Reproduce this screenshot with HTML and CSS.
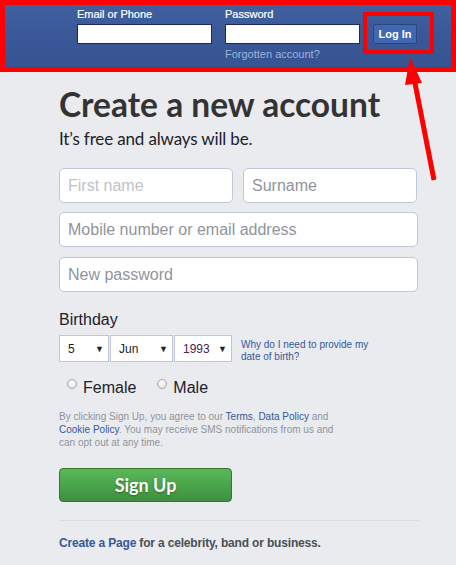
FILE: index.html
```html
<!DOCTYPE html>
<html>
<head>
<meta charset="utf-8">
<link rel="stylesheet" href="styles.css">
</head>
<body>
<header class="topbar">
  <div class="login">
    <label class="lbl">Email or Phone</label>
    <label class="lbl">Password</label>
    <span></span>
    <div class="tin"></div>
    <div class="tin"></div>
    <button class="loginbtn">Log In</button>
    <span></span>
    <a class="forgot">Forgotten account?</a>
    <span></span>
  </div>
</header>

<main class="signup">
  <h1 class="title">Create a new account</h1>
  <p class="sub">It’s free and always will be.</p>

  <div class="row two">
    <div class="field"><span class="ph light">First name</span></div>
    <div class="field"><span class="ph">Surname</span></div>
  </div>
  <div class="field mt9"><span class="ph">Mobile number or email address</span></div>
  <div class="field mt10"><span class="ph">New password</span></div>

  <div class="bday-label">Birthday</div>
  <div class="bday">
    <div class="sel d"><span>5</span><span class="arr">▼</span></div>
    <div class="sel m"><span>Jun</span><span class="arr">▼</span></div>
    <div class="sel y"><span class="yr">1993</span><span class="arr">▼</span></div>
    <a class="why">Why do I need to provide my date of birth?</a>
  </div>

  <div class="gender">
    <label class="radio"><span class="dot"></span>Female</label>
    <label class="radio"><span class="dot"></span>Male</label>
  </div>

  <p class="terms">By clicking Sign Up, you agree to our <a>Terms</a>, <a>Data Policy</a> and <a>Cookie Policy</a>. You may receive SMS notifications from us and can opt out at any time.</p>

  <button class="signbtn">Sign Up</button>

  <hr class="div">

  <p class="page"><a>Create a Page</a> for a celebrity, band or business.</p>
</main>

<div class="hl"></div>
<svg class="arrow" width="456" height="565" viewBox="0 0 456 565">
  <line x1="434" y1="180" x2="414" y2="78" stroke="#ff0000" stroke-width="5"/>
  <polygon points="410,57 422,83 405,85" fill="#ff0000"/>
</svg>
</body>
</html>
```

FILE: styles.css
```css
* { box-sizing: border-box; }
html, body { margin: 0; padding: 0; }
body {
  background: #e9ebee;
  font-family: "Liberation Sans", Arial, sans-serif;
  width: 456px;
  height: 565px;
  overflow: hidden;
  position: relative;
}
a { color: #365899; text-decoration: none; }

.topbar {
  height: 72px;
  border: 5px solid #ff0000;
  background: linear-gradient(#40609f, #3b5998 40%, #365492);
  padding: 2px 0 0 72px;
}
.login {
  display: grid;
  grid-template-columns: 135px 135px auto;
  column-gap: 13px;
  align-items: start;
}
.lbl {
  color: #fff;
  font-size: 11px;
  line-height: 14px;
  margin-bottom: 3px;
  -webkit-text-stroke: 0.2px #fff;
}
.tin {
  height: 20px;
  background: #fff;
  border: 1px solid #1d2a5b;
}
.loginbtn {
  width: 44px;
  height: 20px;
  background: #4267b2;
  border: 1px solid #29487d;
  color: #fff;
  font: bold 11px "Liberation Sans", Arial, sans-serif;
  padding: 0;
  border-radius: 2px;
}
.forgot {
  color: #9cb4d8;
  font-size: 11px;
  line-height: 14px;
  margin-top: 3px;
}

.signup {
  padding: 0 0 0 59px;
  width: 419px;
}
.title {
  margin: 12px 0 0;
  font: bold 33.5px/40px Lato, "Open Sans", sans-serif;
  color: #333;
}
.sub {
  margin: 3px 0 0;
  font: 17px/24px Lato, sans-serif;
  letter-spacing: -0.15px;
  color: #1d2129;
}
.row.two {
  display: flex;
  gap: 10px;
  margin-top: 17px;
}
.row.two .field { width: 174px; }
.field {
  height: 35px;
  background: #fff;
  border: 1px solid #bdc7d8;
  border-radius: 5px;
  padding: 0 8px;
  display: flex;
  align-items: center;
  width: 359px;
}
.ph {
  font-size: 16px;
  color: #90949c;
}
.ph.light { color: #bec3c9; }
.mt9 { margin-top: 9px; }
.mt10 { margin-top: 10px; }

.bday-label {
  margin-top: 18px;
  font-size: 16px;
  line-height: 20px;
  color: #1d2129;
}
.bday {
  display: flex;
  align-items: flex-start;
  margin-top: 5px;
}
.sel {
  height: 27px;
  background: #fff;
  border: 1px solid #bdc7d8;
  display: flex;
  align-items: center;
  justify-content: space-between;
  padding: 0 4px 0 8px;
  font-size: 12px;
  color: #1d2129;
  margin-right: 1px;
}
.sel.d { width: 50px; }
.sel.m { width: 63px; }
.sel.y { width: 58px; margin-right: 0; }
.yr { color: #4b1d4b; }
.arr { font-size: 9px; color: #1d2129; }
.why {
  margin-left: 9px;
  width: 130px;
  font-size: 10px;
  line-height: 12px;
  margin-top: 4px;
}

.gender {
  display: flex;
  gap: 21px;
  margin-top: 15px;
  padding-left: 8px;
}
.radio {
  display: flex;
  align-items: center;
  font-size: 16px;
  line-height: 20px;
  color: #1d2129;
}
.dot {
  width: 10px;
  height: 10px;
  border-radius: 50%;
  border: 1px solid #a6a6a6;
  background: radial-gradient(circle at 50% 35%, #fff, #dcdcdc);
  margin-right: 6px;
  margin-top: -8px;
}

.terms {
  margin: 12px 0 0;
  width: 280px;
  font-size: 10px;
  line-height: 13px;
  color: #90949c;
}
.signbtn {
  display: block;
  margin-top: 19px;
  width: 173px;
  height: 34px;
  border: 1px solid #3b7327;
  border-radius: 4px;
  background: linear-gradient(#5cb85c, #4aa54a 50%, #3f8f3f);
  color: #fff;
  font: bold 18px Lato, sans-serif;
  text-shadow: 0 1px 2px rgba(0,0,0,.35);
  padding: 0;
}
.div {
  margin: 18px 0 0;
  border: 0;
  border-top: 1px solid #dadde1;
  width: 360px;
}
.page {
  margin: 14px 0 0;
  font-size: 12px;
  font-weight: bold;
  letter-spacing: -0.17px;
  line-height: 16px;
  color: #4b4f56;
}

.hl {
  position: absolute;
  left: 363px;
  top: 12px;
  width: 71px;
  height: 42px;
  border: 4px solid #ff0000;
}
.arrow {
  position: absolute;
  left: 0;
  top: 0;
  pointer-events: none;
}
```
